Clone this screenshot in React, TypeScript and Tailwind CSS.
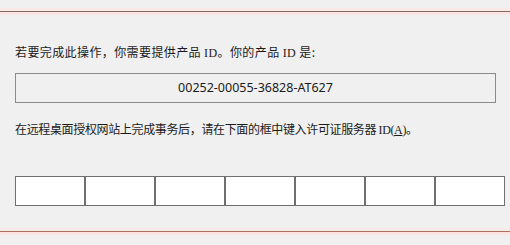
// Remote desktop licensing dialog: product ID + license server ID entry.

const cjk = "font-['Microsoft_YaHei','Noto_Sans_CJK_SC',sans-serif]";
const serif = "font-['Liberation_Serif','Noto_Sans_CJK_SC',serif]";

function Divider({ tone }: { tone: "top" | "bottom" }) {
  return (
    <div className="flex flex-col">
      <div className="h-[3px] bg-[#f8ebe7]" />
      <div className={tone === "top" ? "h-px bg-[#856767]" : "h-px bg-[#a8735e]"} />
      <div className="h-[3px] bg-[#fbe5e2]" />
    </div>
  );
}

export default function App() {
  const fields = [0, 1, 2, 3, 4, 5, 6];

  return (
    <div className={`w-[510px] h-[245px] bg-[#f0f0f0] overflow-hidden text-[#1b1b1b] ${cjk}`}>
      <div className="pt-[8px]">
        <Divider tone="top" />
      </div>

      <div className="px-[15px] flex flex-col">
        <p className="mt-[29px] text-[12px] leading-[16px] tracking-[0.4px] whitespace-nowrap">
          若要完成此操作，你需要提供产品 <span className={serif}>ID</span>。你的产品{" "}
          <span className={serif}>ID</span> 是:
        </p>

        <div className="mt-[12px] w-[481px] h-[30px] border border-[#8a8a8a] flex items-center justify-center">
          <span className="font-['Noto_Sans',sans-serif] text-[12.5px] leading-none">
            00252-00055-36828-AT627
          </span>
        </div>

        <p className="mt-[18px] text-[12px] leading-[16px] tracking-[-0.35px] whitespace-nowrap">
          在远程桌面授权网站上完成事务后，请在下面的框中键入许可证服务器{" "}
          <span className={serif}>
            ID(<span className="underline">A</span>)
          </span>
          。
        </p>

        <div className="mt-[38px] flex">
          {fields.map((i) => (
            <input
              key={i}
              type="text"
              className="w-[70px] h-[30px] bg-white border border-[#6f6f6f] outline-none"
            />
          ))}
        </div>
      </div>

      <div className="mt-[22px]">
        <Divider tone="bottom" />
      </div>
    </div>
  );
}
